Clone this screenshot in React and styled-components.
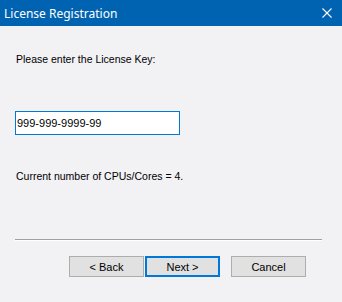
import React from 'react';
import styled, { createGlobalStyle } from 'styled-components';

const GlobalStyle = createGlobalStyle`
  html, body {
    margin: 0;
    padding: 0;
    background: #f2f1f4;
  }
  * {
    box-sizing: border-box;
  }
`;

const Window = styled.div`
  width: 342px;
  height: 302px;
  background: #f2f1f4;
  display: flex;
  flex-direction: column;
  font-family: "Liberation Sans", Arial, sans-serif;
  font-size: 11px;
  color: #000;
`;

const TitleBar = styled.div`
  height: 26px;
  background: #0063b1;
  display: flex;
  align-items: center;
  justify-content: space-between;
  padding: 0 10px 0 4px;
`;

const Title = styled.span`
  font-family: "Noto Sans", "Open Sans", sans-serif;
  font-size: 12px;
  color: #fff;
`;

const CloseIcon = () => (
  <svg width="10" height="10" viewBox="0 0 10 10">
    <path d="M0.5 0.5 L9.5 9.5 M9.5 0.5 L0.5 9.5" stroke="#fff" strokeWidth="1.1" />
  </svg>
);

const Body = styled.div`
  flex: 1;
  display: flex;
  flex-direction: column;
  padding: 27px 20px 0 15px;
`;

const Label = styled.div`
  font-size: 10.5px;
  line-height: 13px;
  padding-left: 1px;
  margin-bottom: ${p => p.gap || 0}px;
`;

const KeyInput = styled.input`
  width: 165px;
  height: 24px;
  border: 1px solid #0078d7;
  background: #fff;
  font-family: "Liberation Sans", Arial, sans-serif;
  font-size: 11px;
  padding: 0 0 0 1px;
  margin: 0 0 35px;
  outline: none;
  color: #000;
`;

const Separator = styled.div`
  height: 2px;
  border-top: 1px solid #a0a0a0;
  border-bottom: 1px solid #fff;
  margin-bottom: 15px;
`;

const ButtonRow = styled.div`
  display: flex;
  padding-left: 54px;
`;

const Button = styled.button`
  width: 75px;
  height: 21px;
  margin-left: ${p => p.gap || 0}px;
  background: #e1e1e1;
  border: ${p => (p.primary ? '2px solid #0078d7' : '1px solid #adadad')};
  font-family: "Liberation Sans", Arial, sans-serif;
  font-size: 11px;
  color: #000;
  padding: 0;
`;

export default function App() {
  return (
    <Window>
      <GlobalStyle />
      <TitleBar>
        <Title>License Registration</Title>
        <CloseIcon />
      </TitleBar>
      <Body>
        <Label gap={45}>Please enter the License Key:</Label>
        <KeyInput defaultValue="999-999-9999-99" />
        <Label gap={56}>Current number of CPUs/Cores = 4.</Label>
        <Separator />
        <ButtonRow>
          <Button>&lt; Back</Button>
          <Button primary gap={1}>Next &gt;</Button>
          <Button gap={11}>Cancel</Button>
        </ButtonRow>
      </Body>
    </Window>
  );
}
